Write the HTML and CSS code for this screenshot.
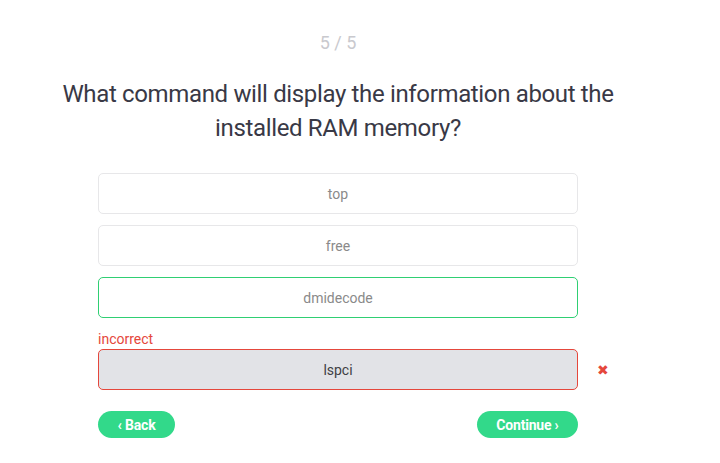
FILE: index.html
```html
<!DOCTYPE html>
<html>
<head>
<meta charset="utf-8">
<link rel="stylesheet" href="styles.css">
</head>
<body>
<div class="quiz">
  <div class="counter">5 / 5</div>
  <h1 class="question">What command will display the information about the installed RAM memory?</h1>
  <div class="options">
    <div class="option">top</div>
    <div class="option">free</div>
    <div class="option correct">dmidecode</div>
    <div class="answer">
      <div class="label">incorrect</div>
      <div class="row">
        <div class="option wrong">lspci</div>
        <span class="mark">✖</span>
      </div>
    </div>
  </div>
  <div class="nav">
    <button class="btn back">‹ Back</button>
    <button class="btn next">Continue ›</button>
  </div>
</div>
</body>
</html>
```
FILE: styles.css
```css
html, body { margin: 0; padding: 0; background: #fff; }
body { font-family: Roboto, "Liberation Sans", sans-serif; }
.quiz { width: 480px; margin-left: 98px; padding-top: 31px; }
.counter { text-align: center; font-size: 18px; color: #c9c9ce; line-height: 24px; }
.question {
  margin: 22px -45px 0; font-weight: 400; font-size: 24px; line-height: 34px;
  color: #393946; text-align: center; letter-spacing: -0.35px;
}
.options { margin-top: 28px; display: flex; flex-direction: column; gap: 11px; }
.option {
  height: 41px; box-sizing: border-box; border: 1px solid #e7e7e9; border-radius: 5px;
  display: flex; align-items: center; justify-content: center;
  font-size: 14px; color: #8a8a8a; background: #fff;
}
.option.correct { border-color: #2fcf73; }
.option.wrong { border-color: #e5473c; background: #e2e3e7; color: #3f3f44; width: 480px; flex: none; }
.answer { margin-top: 2px; }
.label { color: #e5473c; font-size: 14px; line-height: 16px; margin-bottom: 2px; }
.row { display: flex; align-items: center; width: 520px; }
.mark { color: #e5473c; font-size: 14px; margin-left: 19px; }
.nav { display: flex; justify-content: space-between; margin-top: 21px; }
.btn {
  border: 0; background: #32d98a; color: #fff; font-family: Roboto, sans-serif;
  font-weight: 700; font-size: 14px; height: 27px; border-radius: 14px; padding: 0;
  letter-spacing: -0.2px;
}
.back { width: 77px; }
.next { width: 101px; }
```
